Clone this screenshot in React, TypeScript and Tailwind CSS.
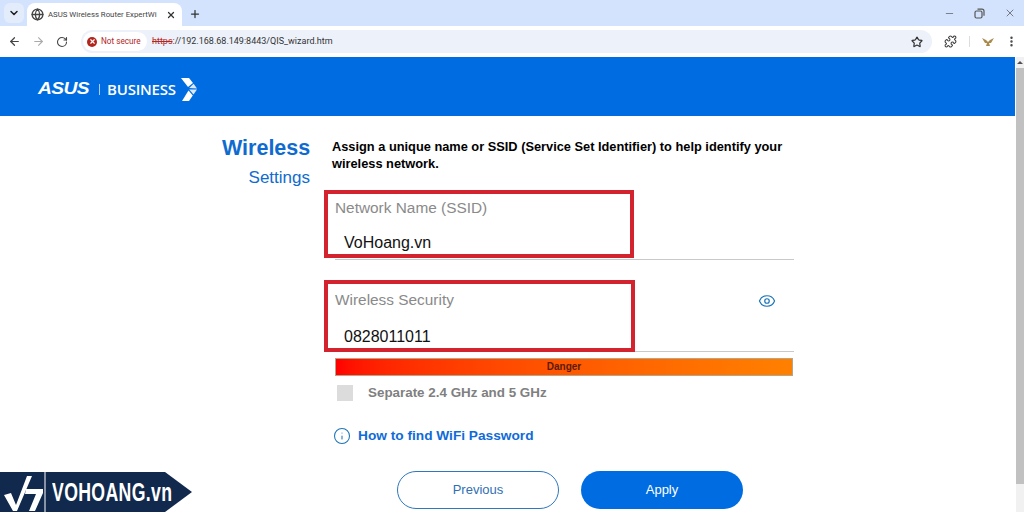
import type { ReactNode } from "react";
import { ArrowLeft, ArrowRight, RotateCw, Star, Puzzle, EllipsisVertical, X, Plus, ChevronDown, Globe, Minus, Eye, Info } from "lucide-react";

const F = "font-['Liberation_Sans',Arial,sans-serif]";

function Chrome() {
  return (
    <div className="font-['Roboto',sans-serif] text-[#3c4043]">
      <div className="h-[26px] bg-[#d3e3fd] flex items-end pl-[4px]">
        <div className="w-[20px] h-[20px] mb-[3px] rounded-md bg-[#e3ecfb] flex items-center justify-center shrink-0">
          <ChevronDown size={12} strokeWidth={3} className="text-[#1f1f1f]" />
        </div>
        <div className="ml-[3px] w-[155px] h-[23px] bg-white rounded-t-lg flex items-center pl-[4px] pr-[6px] shrink-0">
          <Globe size={13} strokeWidth={2.4} className="text-[#444] shrink-0" />
          <span className="ml-[4px] text-[7.8px] whitespace-nowrap text-[#444]">ASUS Wireless Router ExpertWi</span>
          <X size={10} strokeWidth={3} className="text-[#333] ml-auto shrink-0" />
        </div>
        <Plus size={12} strokeWidth={2.5} className="ml-[7px] mb-[6px] text-[#333]" />
        <div className="ml-auto flex items-center mb-[7px] gap-[19px] pr-[8px] text-[#555]">
          <Minus size={11} strokeWidth={1.5} />
          <svg width="11" height="11" viewBox="0 0 11 11" fill="none" stroke="currentColor" strokeWidth="1.2"><rect x="1" y="3" width="7" height="7" rx="1.5" /><path d="M3.5 1.2h4.5a2 2 0 0 1 2 2v4.5" /></svg>
          <X size={12} strokeWidth={1.5} />
        </div>
      </div>
      <div className="h-[31px] bg-white flex items-center pl-[8px]">
        <ArrowLeft size={13} strokeWidth={2.2} className="text-[#444] shrink-0" />
        <ArrowRight size={13} strokeWidth={2} className="ml-[11px] text-[#aaa] shrink-0" />
        <RotateCw size={12} strokeWidth={2.2} className="ml-[11px] text-[#444] shrink-0" />
        <div className="ml-[13px] w-[851px] h-[23px] rounded-full bg-[#edf1fa] flex items-center pl-[2px] shrink-0">
          <div className="h-[19px] w-[64px] rounded-full bg-white flex items-center pl-[4px] shrink-0">
            <span className="w-[10px] h-[10px] rounded-full bg-[#b3261e] flex items-center justify-center">
              <X size={7} strokeWidth={4} className="text-white" />
            </span>
            <span className="ml-[4px] text-[8.2px] text-[#b3261e] whitespace-nowrap">Not secure</span>
          </div>
          <span className="ml-[5px] text-[9px] text-[#333] whitespace-nowrap">
            <span className="line-through text-[#b3261e]">https</span>://192.168.68.149:8443/QIS_wizard.htm
          </span>
          <Star size={12} strokeWidth={2.4} className="ml-auto mr-[9px] text-[#333]" />
        </div>
        <Puzzle size={13} strokeWidth={2} className="ml-[12px] text-[#444] shrink-0" />
        <div className="ml-[12px] w-px h-[11px] bg-[#ddd] shrink-0" />
        <svg width="12" height="10" viewBox="0 0 12 10" className="ml-[12px] shrink-0"><path d="M0 1l4 2 2 2 2-2 4-2-3 5-2 0 1 3H4l1-3H3z" fill="#a98a4c" /></svg>
        <EllipsisVertical size={13} strokeWidth={2.5} className="ml-[11px] text-[#444] shrink-0" />
      </div>
    </div>
  );
}

function Logo() {
  return (
    <div className="h-[59px] bg-[#006ce1] flex items-center pl-[38px] pt-[5px] text-white">
      <span className={`${F} italic font-bold text-[16px] leading-none w-[53px] scale-x-[1.2] origin-left tracking-[-0.5px] whitespace-nowrap`}>ASUS</span>
      <span className="w-px h-[11px] bg-[#a9cdf5] ml-[8px]" />
      <span className="ml-[7px] font-['Open_Sans',sans-serif] font-semibold text-[15px] leading-none tracking-[-0.2px]">BUSINESS</span>
      <svg width="17" height="23" viewBox="0 0 17 23" className="ml-[5px]" fill="white">
        <path d="M0 0H8L12 5L7 9Z" />
        <path d="M8.2 10L12.6 5.8L16 10.5Z" opacity="0.85" />
        <path d="M8.2 11.5H16L12.5 16.5Z" opacity="0.85" />
        <path d="M7.5 12.5L11.8 17.5L8 23H1Z" />
      </svg>
    </div>
  );
}

function Field({ label, value, height, top, gap, extra }: { label: string; value: string; height: string; top: string; gap: string; extra?: ReactNode }) {
  return (
    <div className={`${height} ${top} relative border-b border-[#c9c9c9]`}>
      <div className="text-[15.4px] leading-[20px] text-[#8a8a8a]">{label}</div>
      <div className={`${gap} pl-[9px] text-[16px] leading-[20px] text-[#111]`}>{value}</div>
      {extra}
    </div>
  );
}

function Watermark() {
  return (
    <div className="absolute left-0 bottom-0 w-[192px] h-[40px] flex text-white">
      <svg width="192" height="40" viewBox="0 0 192 40" className="absolute inset-0">
        <path d="M0 0H165L192 20L165 40H0Z" fill="#11294d" />
        <path d="M45 0V40" stroke="white" strokeWidth="1" />
        <path d="M4 23L11 21L16 33L27 4H32L17 39H13Z" fill="white" />
        <path d="M26 17H43V21L35 39H29L36 22H25Z" fill="white" />
      </svg>
      <span className={`${F} relative ml-[52px] mt-[6px] font-bold text-[26px] leading-[28px] tracking-[0.5px] scale-x-[0.68] origin-left whitespace-nowrap`}>VOHOANG.vn</span>
    </div>
  );
}

export default function App() {
  return (
    <div className={`${F} w-[1024px] h-[512px] overflow-hidden bg-white relative`}>
      <Chrome />
      <div className="flex h-[455px]">
        <main className="w-[1015px] shrink-0">
          <Logo />
          <div className="flex pl-[222px] pt-[18px]">
            <div className="w-[88px] pt-px text-right text-[#0f6bcf]">
              <div className="font-bold text-[21.5px] leading-[27px] whitespace-nowrap">Wireless</div>
              <div className="text-[17px] leading-[22px] mt-[5px] whitespace-nowrap">Settings</div>
            </div>
            <div className="ml-[22px] w-[462px]">
              <p className="font-bold text-[12.8px] leading-[17px] text-black w-[462px] pt-[4px]">
                Assign a unique name or SSID (Service Set Identifier) to help identify your wireless network.
              </p>
              <div className="ml-[3px] w-[459px]">
                <div className="mt-[19px]">
                  <Field label="Network Name (SSID)" value="VoHoang.vn" height="h-[69px]" top="pt-[7px]" gap="mt-[15px]" />
                </div>
                <div className="mt-[22px]">
                  <Field
                    label="Wireless Security"
                    value="0828011011"
                    height="h-[70px]"
                    top="pt-[8px]"
                    gap="mt-[17px]"
                    extra={<Eye size={18} strokeWidth={1.6} className="absolute right-[18px] top-[10px] text-[#1c74b8]" />}
                  />
                </div>
                <div className="mt-[6px] mr-px h-[18px] border border-[#b5a58a] bg-gradient-to-r from-[#ff0000] to-[#ff8000] text-center text-[10px] font-bold leading-[16px] text-[#5c1a0a]">Danger</div>
                <div className="mt-[8px] flex items-center h-[18px] pl-[2px]">
                  <span className="w-[16px] h-[16px] bg-[#dcdcdc]" />
                  <span className="ml-[15px] font-bold text-[13.4px] text-[#808080]">Separate 2.4 GHz and 5 GHz</span>
                </div>
                <div className="mt-[25px] flex items-center h-[18px] text-[#0f6bd8]">
                  <Info size={18} strokeWidth={1.4} className="-ml-[2px] text-[#1c74b8]" />
                  <span className="ml-[7px] font-bold text-[13.7px]">How to find WiFi Password</span>
                </div>
              </div>
              <div className="mt-[26px] ml-[65px] flex gap-[22px] text-[13px]">
                <button className="w-[162px] h-[38px] rounded-full border border-[#2e78bd] text-[#2f6fb5] bg-white">Previous</button>
                <button className="w-[162px] h-[38px] rounded-full bg-[#006ce1] text-white">Apply</button>
              </div>
            </div>
          </div>
        </main>
        <aside className="ml-px w-[8px] bg-[#f1f1f1] flex flex-col">
          <div className="h-[11px] flex items-center justify-center">
            <span className="w-0 h-0 border-x-[3px] border-x-transparent border-b-[3px] border-b-[#505050]" />
          </div>
          <div className="h-[416px] bg-[#c1c1c1]" />
        </aside>
      </div>
      <div className="absolute left-[324px] top-[190px] w-[310px] h-[68px] border-[4px] border-[#d2232e]" />
      <div className="absolute left-[324px] top-[280px] w-[311px] h-[72px] border-[4px] border-[#d2232e]" />
      <Watermark />
    </div>
  );
}
